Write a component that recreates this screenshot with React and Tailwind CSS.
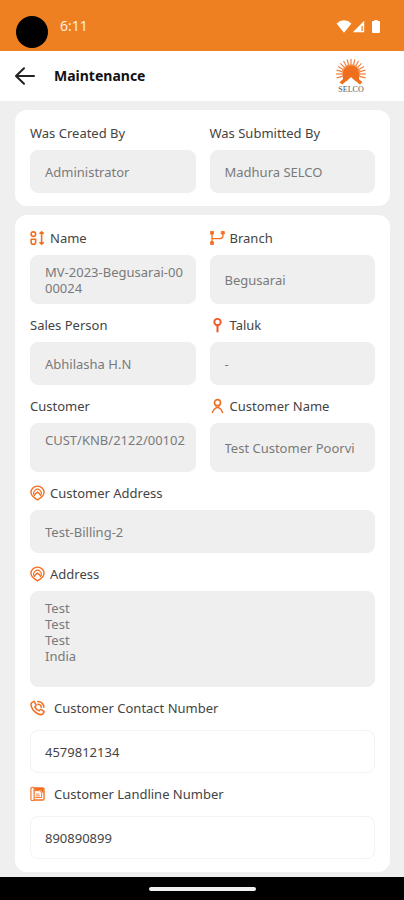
import React, { useState } from 'react';

const iconProps = {
    viewBox: '0 0 16 16',
    fill: 'none',
    stroke: '#f26f21',
    strokeWidth: 1.7,
    strokeLinecap: 'round',
    strokeLinejoin: 'round',
    className: 'w-[15px] h-4 shrink-0',
    'aria-hidden': true,
};

const NameIcon = () => (
    <svg {...iconProps}>
        <circle cx="3.6" cy="3.9" r="2.4" />
        <path d="M1.2 9.4h4.8v3a2.4 2.4 0 0 1-4.8 0z" />
        <path d="M12.4 2v12 M10.6 3l1.8-1.6L14.2 3 M10.6 13l1.8 1.6 1.8-1.6" />
    </svg>
);

const BranchIcon = () => (
    <svg {...iconProps}>
        <path d="M2.2 2.5v11 M2.2 8.6h8.6q3 0 3-3V2.5" strokeWidth="1.4" />
        <path d="M.8 1h2.8v2.8H.8z M.8 12h2.8v2.8H.8z M12.4 1h2.8v2.8h-2.8z" fill="#f26f21" strokeWidth="1" />
    </svg>
);

const PinIcon = () => (
    <svg {...iconProps} stroke="#f0592b">
        <circle cx="8" cy="4.8" r="3.4" strokeWidth="2" />
        <path d="M8 8.5v6.3" strokeWidth="2.2" />
    </svg>
);

const PersonIcon = () => (
    <svg {...iconProps}>
        <circle cx="8" cy="4.4" r="3.2" />
        <path d="M2.6 14.8c.5-2.6 2.3-4 3.8-4.8 1-.5 2.2-.5 3.2 0 1.5.8 3.3 2.2 3.8 4.8" />
        <path d="M5.8 7.2 7 9.4 M10.2 7.2 9 9.4" strokeWidth="1.2" />
    </svg>
);

const AddressIcon = () => (
    <svg {...iconProps} strokeWidth={1.5}>
        <path d="M8 15.3c-1.5-1-7-3.3-7-8a7 6.6 0 0 1 14 0c0 4.7-5.5 7-7 8z" />
        <path d="M5 10.8a4 4 0 1 1 6 0" strokeWidth="1.2" />
        <path d="M5.4 9.3 8 6.9l2.6 2.4" strokeWidth="1.7" />
    </svg>
);

const CallIcon = () => (
    <svg {...iconProps} strokeWidth={1.6}>
        <path d="M3.7 1.2 1.6 2.5C.2 4.8 2 9 4.8 11.6c2.9 2.7 6.6 4.2 8.9 2.8l1.2-1.9c.3-.5.1-1-.4-1.3l-2.6-1.5c-.5-.3-1-.1-1.3.3l-.8 1.1C7.7 10.4 6 8.7 5.1 6.8l1-1c.4-.4.5-.9.2-1.4L4.9 1.6c-.3-.5-.8-.7-1.2-.4z" />
        <path d="M8.3 1.1a6 6 0 0 1 6.4 6.2 M8.4 3.9a3.4 3.4 0 0 1 3.6 3.5" />
    </svg>
);

const LandlineIcon = () => (
    <svg {...iconProps} strokeWidth={1.4}>
        <path d="M2.8 1.6h10.8a1.4 1.4 0 0 1 1.4 1.4v10a1.4 1.4 0 0 1-1.4 1.4H2.8" />
        <path d="M5 1.6h9.4v6.200L11 4H5z" fill="#f26f21" stroke="none" />
        <rect x="1" y=".8" width="3.4" height="14.4" rx="1.5" fill="#fff" strokeWidth="1.2" />
        <path d="M4.6 4.4H10l2.4 2.4v5H6" strokeWidth="1" />
        <path d="M6.6 8h3 M6.6 10h3.6" strokeWidth=".9" />
    </svg>
);

const rays = Array.from({ length: 15 }, (_, i) => -15 + i * 15);

const SelcoLogo = () => (
    <div className="flex flex-col items-center w-8">
        <svg viewBox="0 0 32 28" className="w-8 h-7" aria-hidden="true">
            {rays.map((deg) => (
                <path
                    key={deg}
                    d="M7 16H1"
                    stroke="#f0803f"
                    strokeWidth="1.2"
                    transform={`rotate(${deg} 16 16)`}
                />
            ))}
            <circle cx="16" cy="15.5" r="9.4" fill="#f59a5c" />
            <path d="M16 7.5a8 8 0 0 1 8 8v6H8v-6a8 8 0 0 1 8-8z" fill="#ee6f1f" />
            <path d="M16 19 5 29.500h22z M3 26l5-5 0-2-6 4z M29 26l-5-5 0-2 6 4z" fill="#fff" />
            <path d="M16 14 4.5 24.2l2.800 2.300L16 18.800l8.700 7.700 2.800-2.300z" fill="#ee6f1f" />
        </svg>
        <span className="font-['Liberation_Serif',serif] text-[8px] leading-[8px] text-[#555]">SELCO</span>
    </div>
);

const StatusBar = () => (
    <div className="h-[51px] bg-[#ee8022] flex items-start justify-between pl-4 pr-6">
        <div className="flex gap-3">
            <span className="size-8 mt-4 rounded-full bg-black" />
            <span className="mt-4 font-['Open_Sans',sans-serif] text-sm leading-5 font-medium text-white/90">6:11</span>
        </div>
        <div className="flex items-center mt-5">
            <svg viewBox="0 0 16 13" className="w-4 h-[13px]" fill="#fff" aria-hidden="true">
                <path d="M8 12.8.6 3.4Q3.8.3 8 .3t7.4 3.1z" />
            </svg>
            <svg viewBox="0 0 13 13" className="w-[13px] h-[13px]" aria-hidden="true">
                <path d="M.8 12.2 12.2.8v11.4z" fill="#fff" />
                <path d="M9.3 6H11v5H9.3z" fill="#ee8022" fillOpacity=".75" />
            </svg>
            <svg viewBox="0 0 8 13" className="w-2 h-[13px] ml-[7px]" fill="#fff" aria-hidden="true">
                <path d="M2.5 0h3v1H7q1 0 1 1v10q0 1-1 1H1q-1 0-1-1V2q0-1 1-1h1.5z" />
            </svg>
        </div>
    </div>
);

const Header = () => (
    <header className="h-[50px] bg-white flex items-center justify-between pl-[14px] pr-[37px]">
        <div className="flex items-center gap-[18px]">
            <button type="button" aria-label="Back">
                <svg viewBox="0 0 22 20" className="w-[22px] h-5" fill="none" stroke="#222" strokeWidth="2" strokeLinecap="round" strokeLinejoin="round">
                    <path d="M20 10H2.5 M10 2.2 2 10l8 7.8" />
                </svg>
            </button>
            <h1 className="text-sm leading-5 font-bold text-[#111]">Maintenance</h1>
        </div>
        <SelcoLogo />
    </header>
);

const Field = ({ id, label, icon: Icon, value, rows, height = 'h-[43px]', editable, wide }) => {
    const [text, setText] = useState(value);
    const shared = {
        id,
        value: text,
        onChange: (e) => setText(e.target.value),
        readOnly: !editable,
    };
    const box = editable
        ? 'bg-white border-[#f3f3f3] text-[#444]'
        : 'bg-[#efefef] border-[#efefef] text-[#7a7a7a]';

    return (
        <div className={`flex flex-col ${editable ? 'gap-3' : 'gap-[7px]'} ${wide ? 'col-span-2' : ''}`}>
            <label
                htmlFor={id}
                className={`flex items-center h-5 text-[13px] leading-5 text-[#444] whitespace-nowrap ${editable ? 'gap-[9px]' : 'gap-[5px]'}`}
            >
                {Icon && <Icon />}
                {label}
            </label>
            {rows ? (
                <textarea
                    {...shared}
                    rows={rows}
                    className={`block w-full ${height} pl-[14px] pr-[9px] py-2 rounded-lg border text-[13px] leading-4 resize-none overflow-hidden break-all outline-none ${box}`}
                />
            ) : (
                <input
                    {...shared}
                    type={editable ? 'tel' : 'text'}
                    className={`block w-full ${height} pl-[14px] pr-[9px] rounded-lg border text-[13px] leading-4 outline-none ${box}`}
                />
            )}
        </div>
    );
};

const Card = ({ children }) => (
    <section className="grid grid-cols-2 gap-x-[14px] gap-y-[11px] bg-white rounded-xl px-[15px] py-[13px]">
        {children}
    </section>
);

const App = () => {
    return (
        <div className="min-h-screen flex flex-col bg-[#efefef] font-['Noto_Sans',sans-serif]">
            <StatusBar />
            <Header />

            <main className="flex-1 flex flex-col gap-[9px] pl-[15px] pr-[14px] pt-[9px] pb-[5px]">
                <Card>
                    <Field id="createdBy" label="Was Created By" value="Administrator" />
                    <Field id="submittedBy" label="Was Submitted By" value="Madhura SELCO" />
                </Card>

                <Card>
                    <Field id="name" label="Name" icon={NameIcon} value="MV-2023-Begusarai-0000024" rows={2} height="h-[49px]" />
                    <Field id="branch" label="Branch" icon={BranchIcon} value="Begusarai" height="h-[49px]" />
                    <Field id="salesPerson" label="Sales Person" value="Abhilasha H.N" />
                    <Field id="taluk" label="Taluk" icon={PinIcon} value="-" />
                    <Field id="customer" label="Customer" value="CUST/KNB/2122/00102" rows={2} height="h-[49px]" />
                    <Field id="customerName" label="Customer Name" icon={PersonIcon} value="Test Customer Poorvi" height="h-[49px]" />
                    <Field id="customerAddress" label="Customer Address" icon={AddressIcon} value="Test-Billing-2" wide />
                    <Field id="address" label="Address" icon={AddressIcon} value={'Test\nTest\nTest\nIndia'} rows={5} height="h-24" wide />
                    <Field id="contactNumber" label="Customer Contact Number" icon={CallIcon} value="4579812134" editable wide />
                    <Field id="landlineNumber" label="Customer Landline Number" icon={LandlineIcon} value="890890899" editable wide />
                </Card>
            </main>

            <footer className="h-[23px] bg-black flex items-center justify-center">
                <span className="w-[107px] h-1 rounded-full bg-[#f0f0f0]" />
            </footer>
        </div>
    );
};

export default App;
